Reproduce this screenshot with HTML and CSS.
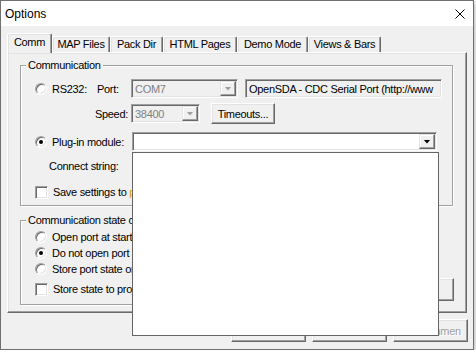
FILE: index.html
```html
<!DOCTYPE html>
<html>
<head>
    <meta charset="UTF-8">
    <title>Options</title>
    <link rel="stylesheet" href="styles.css">
</head>
<body>
<div class="window">
    <div class="titlebar">
        <span class="title">Options</span>
        <svg class="close" width="10" height="10" viewBox="0 0 10 10">
            <path d="M0.5 0.5 L9.5 9.5 M9.5 0.5 L0.5 9.5" stroke="#000" stroke-width="1" fill="none"/>
        </svg>
    </div>
    <div class="client">
        <div class="tabs">
            <div class="tab active w-comm">Comm</div>
            <div class="tab w-map">MAP Files</div>
            <div class="tab w-pack">Pack Dir</div>
            <div class="tab w-html">HTML Pages</div>
            <div class="tab w-demo">Demo Mode</div>
            <div class="tab w-views">Views &amp; Bars</div>
        </div>
        <div class="sheet">
            <div class="group group-comm">
                <span class="legend">Communication</span>
                <div class="row row-rs">
                    <span class="radio"></span>
                    <span class="lbl w-rs">RS232:</span>
                    <span class="lbl w-port">Port:</span>
                    <div class="combo disabled w-com"><span class="val">COM7</span><span class="drop"><i></i></span></div>
                    <div class="edit">OpenSDA - CDC Serial Port (http://www</div>
                </div>
                <div class="row row-speed">
                    <span class="lbl w-speed">Speed:</span>
                    <div class="combo disabled w-baud"><span class="val">38400</span><span class="drop"><i></i></span></div>
                    <div class="btn w-timeouts">Timeouts...</div>
                </div>
                <div class="row row-plugin">
                    <span class="radio checked"></span>
                    <span class="lbl w-plugin">Plug-in module:</span>
                    <div class="combo w-module"><span class="val"></span><span class="drop"><i></i></span></div>
                </div>
                <div class="row row-connect">
                    <span class="lbl">Connect string:</span>
                </div>
                <div class="row row-save">
                    <span class="check"></span>
                    <span class="lbl">Save settings to <span class="hl">project</span></span>
                </div>
            </div>
            <div class="lower">
                <div class="group group-state">
                    <span class="legend">Communication state on startup</span>
                    <div class="row row-opt"><span class="radio"></span><span class="lbl">Open port at startup</span></div>
                    <div class="row row-opt"><span class="radio checked"></span><span class="lbl">Do not open port</span></div>
                    <div class="row row-opt last"><span class="radio"></span><span class="lbl">Store port state on exit</span></div>
                    <div class="row row-store"><span class="check"></span><span class="lbl">Store state to project</span></div>
                </div>
                <div class="btn w-more">...</div>
            </div>
        </div>
        <div class="actions">
            <div class="btn w-action">OK</div>
            <div class="btn w-action">Abbrechen</div>
            <div class="btn w-action off">Übernehmen</div>
        </div>
    </div>
    <div class="droplist"></div>
</div>
</body>
</html>
```

FILE: styles.css
```css
body, div, span {
    margin: 0;
    padding: 0;
    box-sizing: border-box;
}

body {
    background: #fff;
    font-family: "Liberation Sans", Arial, sans-serif;
    font-size: 11px;
    letter-spacing: -0.3px;
    color: #000;
}

.window {
    position: relative;
    width: 474px;
    height: 350px;
    border: 1px solid #6f6f6f;
    background: #f0f0f0;
    box-shadow: 1px 2px 5px rgba(0, 0, 0, 0.3);
}

.titlebar {
    display: flex;
    justify-content: space-between;
    align-items: center;
    height: 25px;
    padding: 0 8px 0 4px;
    background: #fff;
}

.title {
    font-size: 12px;
    letter-spacing: 0;
}

.client {
    padding: 7px 5px 0 6px;
}

/* tabs */
.tabs {
    display: flex;
    align-items: flex-end;
    height: 19px;
}

.tab {
    position: relative;
    height: 16px;
    line-height: 15px;
    text-align: center;
    border-top: 1px solid #fff;
    border-left: 1px solid #fff;
    border-right: 1px solid #696969;
    border-radius: 2px 2px 0 0;
    box-shadow: inset -1px 0 0 #a0a0a0, inset 1px 1px 0 #e3e3e3;
}

.tab.active {
    z-index: 2;
    height: 20px;
    margin-bottom: -1px;
    line-height: 16px;
    background: #f0f0f0;
}

.w-comm { width: 45px; }
.w-map { width: 58px; }
.w-pack { width: 53px; }
.w-html { width: 74px; }
.w-demo { width: 71px; }
.w-views { width: 73px; }

.sheet {
    position: relative;
    width: 460px;
    height: 261px;
    padding: 12px 0 0 12px;
    border: 1px solid;
    border-color: #fff #696969 #696969 #fff;
    box-shadow: inset -1px -1px 0 #a0a0a0, inset 1px 1px 0 #e3e3e3;
}

/* group boxes */
.group {
    position: relative;
    border: 1px solid #a0a0a0;
    box-shadow: inset 1px 1px 0 #fff, 1px 1px 0 #fff;
}

.legend {
    position: absolute;
    top: -7px;
    left: 5px;
    padding: 0 2px;
    line-height: 13px;
    background: #f0f0f0;
}

.group-comm {
    width: 433px;
    height: 141px;
    padding: 13px 0 0 14px;
}

.lower {
    display: flex;
    align-items: flex-end;
    margin-top: 14px;
}

.group-state {
    width: 376px;
    height: 85px;
    padding: 8px 0 0 14px;
}

.row {
    display: flex;
    align-items: center;
    height: 19px;
    white-space: nowrap;
}

.row-speed {
    height: 21px;
    margin-top: 5px;
}

.row-plugin {
    margin-top: 8px;
}

.row-connect {
    height: 14px;
    margin-top: 8px;
    padding-left: 14px;
}

.row-save {
    height: 14px;
    margin-top: 12px;
}

.row-opt {
    height: 16px;
}

.row-opt.last {
    height: 15px;
}

.row-store {
    height: 14px;
    margin-top: 6px;
}

.lbl {
    display: block;
}

.w-rs { width: 45px; }
.w-port { width: 34px; }
.w-speed { width: 93px; margin-right: 3px; text-align: right; }
.w-plugin { width: 80px; }

.hl {
    color: #e09a00;
}

/* radio and check */
.radio {
    position: relative;
    flex: none;
    width: 12px;
    height: 12px;
    margin-right: 5px;
    border-radius: 50%;
    border: 1px solid;
    border-color: #a0a0a0 #fff #fff #a0a0a0;
    background: #fff;
    box-shadow: inset 1px 1px 0 #696969, inset -1px -1px 0 #e3e3e3;
}

.radio.checked::after {
    content: "";
    position: absolute;
    top: 3px;
    left: 3px;
    width: 4px;
    height: 4px;
    border-radius: 50%;
    background: #000;
}

.check {
    flex: none;
    width: 13px;
    height: 13px;
    margin-right: 5px;
    border: 1px solid;
    border-color: #a0a0a0 #fff #fff #a0a0a0;
    background: #fff;
    box-shadow: inset 1px 1px 0 #696969, inset -1px -1px 0 #e3e3e3;
}

/* combo boxes and edits */
.combo, .edit {
    display: flex;
    align-items: center;
    height: 19px;
    border: 1px solid;
    border-color: #a0a0a0 #fff #fff #a0a0a0;
    box-shadow: inset 1px 1px 0 #696969, inset -1px -1px 0 #e3e3e3;
}

.combo {
    padding: 1px 1px 1px 2px;
    background: #fff;
}

.combo .val {
    flex: 1;
    padding-left: 1px;
}

.combo.disabled {
    background: #f0f0f0;
    color: #808080;
}

.drop {
    display: flex;
    align-items: center;
    justify-content: center;
    width: 16px;
    height: 15px;
    background: #f0f0f0;
    border: 1px solid;
    border-color: #e3e3e3 #696969 #696969 #e3e3e3;
    box-shadow: inset -1px -1px 0 #a0a0a0, inset 1px 1px 0 #fff;
}

.drop i {
    display: block;
    width: 7px;
    height: 4px;
    background: #000;
    clip-path: polygon(0 0, 100% 0, 50% 100%);
}

.disabled .drop i {
    background: #a0a0a0;
}

.w-com { width: 107px; }
.w-baud { width: 69px; }
.w-module { width: 305px; }

.edit {
    width: 197px;
    margin-left: 7px;
    padding-left: 3px;
    background: #f0f0f0;
}

/* buttons */
.btn {
    display: flex;
    align-items: center;
    justify-content: center;
    height: 21px;
    background: #f0f0f0;
    border: 1px solid;
    border-color: #fff #696969 #696969 #fff;
    box-shadow: inset -1px -1px 0 #a0a0a0, inset 1px 1px 0 #e3e3e3;
}

.w-timeouts {
    width: 64px;
    margin-left: 11px;
}

.w-more {
    width: 54px;
    height: 23px;
    margin: 0 0 4px 4px;
}

.actions {
    display: flex;
    justify-content: flex-end;
    gap: 6px;
    margin-top: 6px;
}

.w-action {
    width: 75px;
    height: 23px;
}

.btn.off {
    color: #a0a0a0;
    text-shadow: 1px 1px 0 #fff;
}

/* open list of the plug-in combo */
.droplist {
    position: absolute;
    top: 151px;
    left: 131px;
    z-index: 5;
    width: 307px;
    height: 184px;
    border: 1px solid #646464;
    background: #fff;
}
```
